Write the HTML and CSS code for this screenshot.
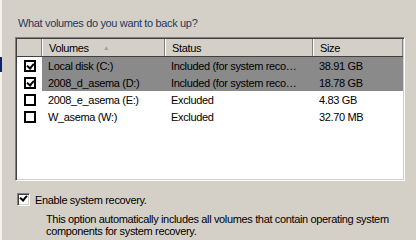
FILE: index.html
```html
<!DOCTYPE html>
<html lang="en">
<head>
    <meta charset="UTF-8">
    <title>Backup Volumes</title>
    <link rel="stylesheet" href="styles.css">
</head>
<body>
    <div class="edge"><div class="edge-mark"></div></div>
    <div class="page">
        <p class="question">What volumes do you want to back up?</p>
        <div class="listview">
            <div class="row header">
                <div class="cell check-col"></div>
                <div class="cell col-name">Volumes <span class="sort">&#9650;</span></div>
                <div class="cell col-status">Status</div>
                <div class="cell col-size">Size</div>
            </div>
            <div class="row selected">
                <div class="cell check-col"><span class="box checked"></span></div>
                <div class="cell col-name">Local disk (C:)</div>
                <div class="cell col-status">Included (for system reco…</div>
                <div class="cell col-size">38.91 GB</div>
            </div>
            <div class="row selected">
                <div class="cell check-col"><span class="box checked"></span></div>
                <div class="cell col-name">2008_d_asema (D:)</div>
                <div class="cell col-status">Included (for system reco…</div>
                <div class="cell col-size">18.78 GB</div>
            </div>
            <div class="row">
                <div class="cell check-col"><span class="box"></span></div>
                <div class="cell col-name">2008_e_asema (E:)</div>
                <div class="cell col-status">Excluded</div>
                <div class="cell col-size">4.83 GB</div>
            </div>
            <div class="row">
                <div class="cell check-col"><span class="box"></span></div>
                <div class="cell col-name">W_asema (W:)</div>
                <div class="cell col-status">Excluded</div>
                <div class="cell col-size">32.70 MB</div>
            </div>
        </div>
        <label class="option">
            <span class="box3d checked"></span>
            Enable system recovery.
        </label>
        <p class="hint">This option automatically includes all volumes that contain operating system components for system recovery.</p>
    </div>
</body>
</html>
```
FILE: styles.css
```css
body {
    margin: 0;
    width: 416px;
    height: 240px;
    overflow: hidden;
    display: flex;
    background-color: #d4d0c8;
    font-family: Tahoma, "Liberation Sans", sans-serif;
    font-size: 11px;
    letter-spacing: -0.35px;
    color: #000;
}
.edge {
    width: 2px;
    background-color: #f4f3ee;
    padding-top: 57px;
}
.edge-mark {
    height: 15px;
    background-color: #0a246a;
}
.page {
    flex: 1;
    min-width: 0;
    padding: 16px 0 0 13px;
}
.question {
    margin: 0 0 7px 3px;
    color: #1e395b;
    line-height: 14px;
}
.listview {
    width: 390px;
    height: 144px;
    background-color: #fff;
    border-top: 1px solid #808080;
    border-left: 1px solid #808080;
    border-right: 1px solid #fff;
    border-bottom: 1px solid #fff;
    box-shadow: inset 1px 1px 0 #404040, inset -1px -1px 0 #d4d0c8;
    padding: 1px;
    box-sizing: border-box;
}
.row {
    display: flex;
    height: 17px;
    align-items: center;
}
.cell {
    white-space: nowrap;
    overflow: hidden;
    box-sizing: border-box;
    padding-left: 6px;
}
.check-col {
    width: 25px;
    padding-left: 7px;
    display: flex;
    align-items: center;
    height: 100%;
    background-color: #fff;
}
.col-name {
    width: 123px;
}
.col-status {
    width: 148px;
}
.col-size {
    width: 90px;
}
.header {
    height: 17px;
    background-color: #d4d0c8;
    border-bottom: 1px solid #404040;
}
.header .cell {
    height: 100%;
    display: flex;
    align-items: center;
    border-left: 1px solid #fff;
    border-right: 1px solid #808080;
}
.header .check-col {
    background-color: #d4d0c8;
    border-left: none;
}
.sort {
    color: #a8a59e;
    font-size: 7px;
    margin-left: 14px;
}
.selected {
    background-color: #8a8a8a;
}
.box {
    display: inline-block;
    width: 12px;
    height: 12px;
    border: 2px solid #000;
    box-sizing: border-box;
    background-color: #fff;
    position: relative;
}
.box.checked::after,
.box3d.checked::after {
    content: "";
    position: absolute;
    left: 2px;
    top: 0px;
    width: 3px;
    height: 5px;
    border-right: 2px solid #000;
    border-bottom: 2px solid #000;
    transform: rotate(40deg);
}
.option {
    display: flex;
    align-items: center;
    margin-top: 12px;
    margin-left: 2px;
    height: 13px;
}
.box3d {
    display: inline-block;
    position: relative;
    width: 13px;
    height: 13px;
    box-sizing: border-box;
    background-color: #fff;
    border-top: 1px solid #808080;
    border-left: 1px solid #808080;
    border-right: 1px solid #fff;
    border-bottom: 1px solid #fff;
    box-shadow: inset 1px 1px 0 #404040, inset -1px -1px 0 #d4d0c8;
    margin-right: 5px;
}
.box3d.checked::after {
    left: 3px;
    top: 0px;
}
.hint {
    margin: 7px 0 0 31px;
    line-height: 12px;
    width: 372px;
}
```
